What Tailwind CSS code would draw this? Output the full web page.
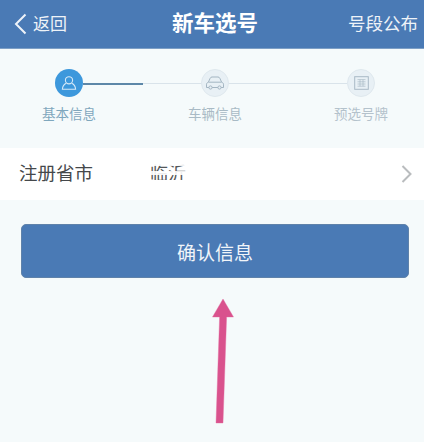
<!DOCTYPE html>
<html lang="zh-CN">
<head>
<meta charset="utf-8">
<script src="https://cdn.jsdelivr.net/npm/@tailwindcss/browser@4"></script>
</head>
<body class="m-0">
<div class="relative w-[424px] h-[442px] overflow-hidden bg-[#f5fafb] font-['Noto_Sans_CJK_SC','Noto_Sans',sans-serif]">
  <header class="h-[49px] bg-[#4a7ab5] border-b border-[#7d9fc6] flex items-center justify-between pl-[14px] pr-[6px] text-[#eef3f8] relative">
    <div class="flex items-center gap-[6px]">
      <svg class="w-[13px] h-[22px]" viewBox="0 0 13 22" fill="none" stroke="#eef3f9" stroke-width="2"><path d="M11.5 1.5 2 11l9.5 9.5"/></svg>
      <span class="text-[17px] leading-none mb-[3px]">返回</span>
    </div>
    <span class="absolute left-[172px] top-[9px] text-[21.5px] leading-[26px] font-bold text-white">新车选号</span>
    <span class="text-[17.5px] leading-none mb-[3px]">号段公布</span>
  </header>

  <section class="h-[99px] relative pl-[42px] pr-[36px] pt-[20px] flex justify-between">
    <div class="absolute left-[83px] top-[34px] w-[60px] h-[1.5px] bg-[#5d87a8]"></div>
    <div class="absolute left-[143px] top-[34px] w-[204px] h-px bg-[#d9e3ea]"></div>
    <div class="w-[54px] flex flex-col items-center relative">
      <div class="w-[28px] h-[28px] rounded-full bg-[#3d98dc] flex items-center justify-center">
        <svg class="w-[18px] h-[18px]" viewBox="0 0 18 18" fill="none" stroke="#d5e9f8" stroke-width="1.1"><circle cx="9" cy="6.3" r="3.6"/><path d="M6.2 9.2C4 10.2 2.6 12 2.4 15.3h13.2C15.4 12 14 10.2 11.8 9.2"/></svg>
      </div>
      <span class="mt-[6px] text-[13.5px] leading-[20px] whitespace-nowrap text-[#7fa7bd]">基本信息</span>
    </div>
    <div class="w-[54px] flex flex-col items-center relative">
      <div class="w-[28px] h-[28px] rounded-full bg-[#e8f0f5] border border-[#dfe8ee] flex items-center justify-center">
        <svg class="w-[20px] h-[16px]" viewBox="0 0 20 16" fill="none" stroke="#a3b5c2" stroke-width="1"><path d="M1.5 12.5V9.2c0-1 .8-1.6 1.8-1.9L5.2 3.2C5.6 2.4 6.2 2 7 2h6c.8 0 1.4.4 1.8 1.2l1.9 4.1c1 .3 1.8.9 1.8 1.9v3.3z"/><path d="M3.6 7.2h12.8"/><circle cx="5.5" cy="12.5" r="1.6" fill="#e8f0f5"/><circle cx="14.5" cy="12.5" r="1.6" fill="#e8f0f5"/></svg>
      </div>
      <span class="mt-[6px] text-[13.5px] leading-[20px] whitespace-nowrap text-[#a9bac5]">车辆信息</span>
    </div>
    <div class="w-[54px] flex flex-col items-center relative">
      <div class="w-[28px] h-[28px] rounded-full bg-[#e8f0f5] border border-[#dfe8ee] flex items-center justify-center">
        <svg class="w-[15px] h-[14px]" viewBox="0 0 15 14" fill="none" stroke="#a9bac6" stroke-width="1"><rect x=".7" y=".7" width="13.6" height="12.6"/><path d="M3.5 3.6h8M3.5 5.8h8M3.5 8h8M3.5 10.2h8M6 3.6v6.6M9 3.6v6.6" stroke-width=".7"/></svg>
      </div>
      <span class="mt-[6px] text-[13.5px] leading-[20px] whitespace-nowrap text-[#b4c2cc]">预选号牌</span>
    </div>
  </section>

  <div class="h-[52px] bg-white flex items-center pl-[19px] pr-[12px] relative">
    <span class="text-[18.5px] leading-none text-[#45484b] mb-[3px]">注册省市</span>
    <span class="absolute left-[150px] top-[13px] text-[18px] leading-[22px] text-[#55585a]">临沂</span>
    <div class="absolute left-[146px] top-[10px] w-[46px] h-[8px] bg-white/90"></div>
    <div class="absolute left-[146px] top-[23px] w-[46px] h-[4px] bg-white/90"></div>
    <div class="absolute left-[146px] top-[32px] w-[46px] h-[8px] bg-white"></div>
    <svg class="ml-auto w-[11px] h-[18px]" viewBox="0 0 11 18" fill="none" stroke="#b9bcbe" stroke-width="2"><path d="M1.5 1 9.5 9l-8 8"/></svg>
  </div>

  <button class="block mt-[24px] ml-[21px] w-[388px] h-[54px] rounded-[5px] bg-[#4a7ab5] border border-[#5f82aa] text-[#f1f5f9] text-[19px] leading-none">确认信息</button>

  <svg class="absolute left-[212px] top-[299px] w-[22px] h-[125px]" viewBox="0 0 22 125"><path d="M11 0 21.5 18H14.6L11 124H4L7.6 18H.5z" fill="#d9528d" stroke="#e46aa0" stroke-width=".4"/></svg>
</div>
</body>
</html>
